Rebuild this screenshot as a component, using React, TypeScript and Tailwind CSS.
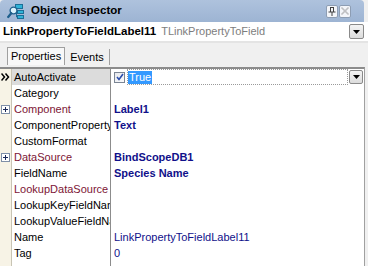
import React from "react";

type Row = {
  name: string;
  value?: string;
  reference?: boolean;
  bold?: boolean;
  plus?: boolean;
  selected?: boolean;
};

const rows: Row[] = [
  { name: "AutoActivate", value: "True", selected: true },
  { name: "Category" },
  { name: "Component", value: "Label1", reference: true, bold: true, plus: true },
  { name: "ComponentProperty", value: "Text", bold: true },
  { name: "CustomFormat" },
  { name: "DataSource", value: "BindScopeDB1", reference: true, bold: true, plus: true },
  { name: "FieldName", value: "Species Name", bold: true },
  { name: "LookupDataSource", reference: true },
  { name: "LookupKeyFieldName" },
  { name: "LookupValueFieldName" },
  { name: "Name", value: "LinkPropertyToFieldLabel11" },
  { name: "Tag", value: "0" },
];

const InspectorIcon = () => (
  <svg width="18" height="17" viewBox="0 0 18 17">
    {/* tree boxes */}
    <rect x="8.5" y="1.5" width="7" height="4" fill="#2fb3d8" stroke="#1b6f97" strokeWidth="1" />
    <rect x="10.5" y="7.5" width="6" height="3" fill="#2fb3d8" stroke="#1b6f97" strokeWidth="1" />
    <rect x="10.5" y="12.5" width="6" height="3" fill="#2fb3d8" stroke="#1b6f97" strokeWidth="1" />
    <path d="M9.5 5.5v8.5h1M9.5 9h1" stroke="#1b6f97" fill="none" strokeWidth="1" />
    {/* magnifier */}
    <circle cx="6.5" cy="7.5" r="3.4" fill="#d9f2fb" stroke="#1e5f8c" strokeWidth="1.3" />
    <path d="M4.2 10.2L1.2 14" stroke="#1e5f8c" strokeWidth="2.2" strokeLinecap="round" />
  </svg>
);

const DropButton = ({ className }: { className: string }) => (
  <div
    className={
      "flex items-center justify-center rounded-[2px] border border-[#8a8a8a] bg-gradient-to-b from-[#f4f4f4] to-[#dcdcdc] " +
      className
    }
  >
    <svg width="7" height="4" viewBox="0 0 7 4">
      <path d="M0 0h7L3.5 4z" fill="#000" />
    </svg>
  </div>
);

const PlusBox = () => (
  <div className="flex h-[9px] w-[9px] items-center justify-center border border-[#7f8fa8] bg-white">
    <svg width="5" height="5" viewBox="0 0 5 5">
      <path d="M0 2.5h5M2.5 0v5" stroke="#1b2a5a" strokeWidth="1" />
    </svg>
  </div>
);

export default function App() {
  return (
    <div
      className="flex h-[266px] w-[368px] flex-col overflow-hidden bg-[#f0f0f0] text-[11px] text-black"
      style={{ fontFamily: '"Liberation Sans", Arial, sans-serif' }}
    >
      {/* title bar */}
      <div className="mr-[4px] flex h-[22px] shrink-0 items-center rounded-t-[4px] bg-gradient-to-b from-[#aec2dd] to-[#9db4d3] pl-[7px] pr-[13px]">
        <InspectorIcon />
        <span className="ml-[6px] flex-1 text-[11.5px] font-bold text-black">Object Inspector</span>
        <div className="flex h-[13px] w-[12px] items-center justify-center rounded-[2px] border border-[#8d9db3] bg-[#f3f5f9]">
          <svg width="8" height="9" viewBox="0 0 8 9">
            <path d="M2 0.5h4M2.5 0.5v4.5M5.5 0.5v4.5M0.5 5h7M4 5v4" stroke="#404040" fill="none" strokeWidth="1" />
          </svg>
        </div>
        <div className="ml-[1px] flex h-[13px] w-[12px] items-center justify-center rounded-[2px] border border-[#8d9db3] bg-[#f3f5f9]">
          <svg width="8" height="8" viewBox="0 0 8 8">
            <path d="M1 0.5l3 3 3-3 .5.5-3 3 3 3-.5.5-3-3-3 3-.5-.5 3-3-3-3z" stroke="#9a9a9a" fill="none" strokeWidth="0.7" />
          </svg>
        </div>
      </div>

      {/* component combo */}
      <div className="flex h-[21px] shrink-0 items-center border-b-[2px] border-[#e4e4e4] bg-white pl-[3px] pr-[4px]">
        <span className="text-[11.5px] font-bold">LinkPropertyToFieldLabel11</span>
        <span className="ml-[5px] flex-1 text-[#7d7d7d]">TLinkPropertyToField</span>
        <DropButton className="h-[15px] w-[15px]" />
      </div>

      {/* tabs */}
      <div className="flex h-[22px] shrink-0 items-end pl-[7px]">
        <div className="flex h-[18px] items-center border border-b-0 border-[#a0a0a0] bg-[#f8f8f8] px-[3px]">
          Properties
        </div>
        <div className="ml-[2px] flex h-[16px] items-center border-r border-[#a0a0a0] pl-[3px] pr-[5px]">Events</div>
      </div>

      {/* property grid */}
      <div className="mr-[3px] mt-[2px] flex flex-1 flex-col border-r border-t-[2px] border-[#a0a0a0] border-t-[#8c8c8c] bg-white">
        {rows.map((r) => (
          <div key={r.name} className="flex h-[16px] shrink-0">
            <div className="flex w-[12px] shrink-0 items-center justify-center border-r border-[#c8c4b4] bg-[#f7f3e6]">
              {r.selected && (
                <svg width="9" height="8" viewBox="0 0 9 8">
                  <path d="M0.5 0.5L3.5 4L0.5 7.5M4.5 0.5L7.5 4L4.5 7.5" stroke="#000" strokeWidth="1.5" fill="none" />
                </svg>
              )}
              {r.plus && <PlusBox />}
            </div>
            <div
              className={
                "flex w-[99px] shrink-0 items-center overflow-hidden whitespace-nowrap border-r border-[#8c8c8c] pl-[2px] " +
                (r.selected ? "bg-[#dcdcdc] " : "") +
                (r.reference ? "text-[#7d1535]" : "text-black")
              }
            >
              {r.name}
            </div>
            {r.selected ? (
              <div className="flex flex-1 items-center pl-[3px] pr-[1px]">
                <div className="flex h-[11px] w-[11px] items-center justify-center border border-[#7b8594] bg-gradient-to-br from-[#e6e8ec] to-[#fbfbfc]">
                  <svg width="8" height="8" viewBox="0 0 8 8">
                    <path d="M1 4l2 2.5L7 1" stroke="#2a4dac" strokeWidth="1.6" fill="none" />
                  </svg>
                </div>
                <div className="ml-[2px] flex h-[16px] flex-1 items-center border border-dotted border-[#9a9a9a]">
                  <span className="bg-[#3399ff] px-[1px] leading-[13px] text-white">{r.value}</span>
                </div>
                <DropButton className="ml-[1px] h-[14px] w-[14px]" />
              </div>
            ) : (
              <div
                className={
                  "flex flex-1 items-center overflow-hidden whitespace-nowrap pl-[3px] text-[#10108a] " +
                  (r.bold ? "font-bold" : "")
                }
              >
                {r.value}
              </div>
            )}
          </div>
        ))}
        <div className="flex flex-1">
          <div className="w-[12px] shrink-0 border-r border-[#c8c4b4] bg-[#f7f3e6]" />
          <div className="w-[99px] shrink-0 border-r border-[#8c8c8c]" />
        </div>
      </div>
    </div>
  );
}
